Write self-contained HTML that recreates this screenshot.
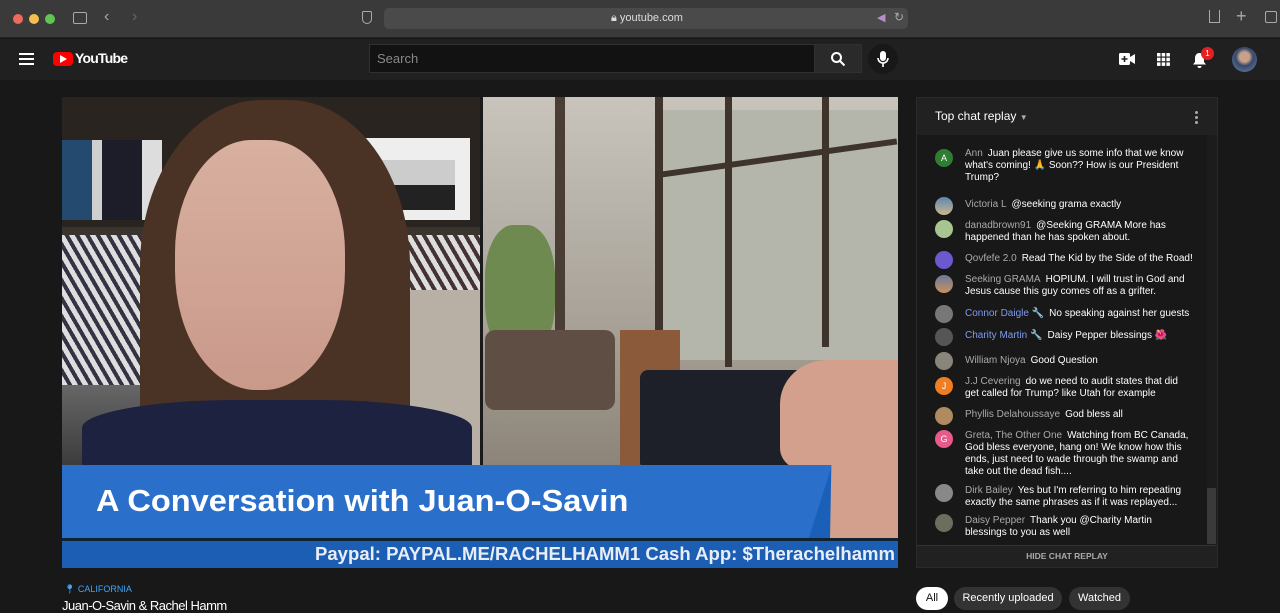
<!DOCTYPE html>
<html><head><meta charset="utf-8"><style>
*{margin:0;padding:0;box-sizing:border-box}
body{width:1280px;height:612px;overflow:hidden;background:#181818;font-family:"Liberation Sans",sans-serif;color:#fff;position:relative}
.abs{position:absolute}
.chat .row{position:absolute;left:965px;width:228px;font-size:10px;line-height:12px;color:#fff}
.chat .n{color:#aaa;margin-right:5px}
.chat .mod{color:#7e9cf0}
.av{position:absolute;left:935px;width:18px;height:18px;border-radius:50%;font-size:9px;text-align:center;line-height:18px;color:#fff}
</style></head><body>
<!-- browser bar -->
<div class="abs" style="left:0;top:0;width:1280px;height:38px;background:#3a3a3a;border-bottom:1px solid #222"></div>
<div class="abs" style="left:13px;top:14px;width:10px;height:10px;border-radius:50%;background:#ec6a5e"></div>
<div class="abs" style="left:29px;top:14px;width:10px;height:10px;border-radius:50%;background:#f4bf4f"></div>
<div class="abs" style="left:45px;top:14px;width:10px;height:10px;border-radius:50%;background:#61c554"></div>
<div class="abs" style="left:73px;top:12px;width:14px;height:12px;border:1.5px solid #aaa;border-radius:2px"></div>
<div class="abs" style="left:104px;top:8px;font-size:16px;color:#aaa">‹</div>
<div class="abs" style="left:132px;top:8px;font-size:16px;color:#666">›</div>
<div class="abs" style="left:362px;top:11px;width:10px;height:13px;border:1.5px solid #aaa;border-radius:2px 2px 6px 6px"></div>
<div class="abs" style="left:384px;top:8px;width:524px;height:21px;background:#4a4a4a;border-radius:5px"></div>
<div class="abs" style="left:611px;top:12px;font-size:11px;color:#ddd">🔒︎ youtube.com</div>
<div class="abs" style="left:877px;top:11px;font-size:11px;color:#b98cc7">◀</div>
<div class="abs" style="left:894px;top:10px;font-size:12px;color:#aaa">↻</div>
<div class="abs" style="left:1209px;top:10px;width:11px;height:13px;border:1.5px solid #aaa;border-top:none"></div>
<div class="abs" style="left:1236px;top:6px;font-size:18px;color:#aaa">+</div>
<div class="abs" style="left:1265px;top:11px;width:12px;height:12px;border:1.5px solid #aaa;border-radius:2px"></div>
<!-- yt header -->
<div class="abs" style="left:0;top:39px;width:1280px;height:41px;background:#202020"></div>
<div class="abs" style="left:19px;top:53px;width:15px;height:2px;background:#fff;box-shadow:0 5px #fff,0 10px #fff"></div>
<div class="abs" style="left:53px;top:52px;width:20px;height:14px;background:#f00;border-radius:4px"></div>
<div class="abs" style="left:60px;top:55px;width:0;height:0;border-left:7px solid #fff;border-top:4px solid transparent;border-bottom:4px solid transparent"></div>
<div class="abs" style="left:75px;top:50px;font-size:14px;font-weight:bold;letter-spacing:-0.8px">YouTube</div>
<div class="abs" style="left:369px;top:44px;width:446px;height:29px;background:#121212;border:1px solid #303030"></div>
<div class="abs" style="left:377px;top:51px;font-size:13px;color:#888">Search</div>
<div class="abs" style="left:814px;top:44px;width:48px;height:29px;background:#2a2a2a;border:1px solid #303030"></div>
<svg class="abs" style="left:830px;top:51px" width="16" height="16" viewBox="0 0 16 16"><circle cx="6.5" cy="6.5" r="4.5" fill="none" stroke="#fff" stroke-width="2"/><path d="M10 10l4.5 4.5" stroke="#fff" stroke-width="2"/></svg>
<div class="abs" style="left:868px;top:44px;width:30px;height:30px;border-radius:50%;background:#181818"></div>
<svg class="abs" style="left:877px;top:51px" width="12" height="16" viewBox="0 0 12 16"><rect x="3" y="0" width="6" height="10" rx="3" fill="#fff"/><path d="M1 7a5 5 0 0010 0M6 12v4" stroke="#fff" stroke-width="1.6" fill="none"/></svg>
<svg class="abs" style="left:1119px;top:53px" width="16" height="12"><rect x="0" y="0" width="11" height="12" rx="1.5" fill="#fff"/><path d="M11 4l5-3v10l-5-3z" fill="#fff"/><path d="M5.5 3v6M2.5 6h6" stroke="#202020" stroke-width="1.6"/></svg>
<svg class="abs" style="left:1157px;top:53px" width="13" height="13"><g fill="#fff"><rect x="0" y="0" width="3.5" height="3.5"/><rect x="4.7" y="0" width="3.5" height="3.5"/><rect x="9.4" y="0" width="3.5" height="3.5"/><rect x="0" y="4.7" width="3.5" height="3.5"/><rect x="4.7" y="4.7" width="3.5" height="3.5"/><rect x="9.4" y="4.7" width="3.5" height="3.5"/><rect x="0" y="9.4" width="3.5" height="3.5"/><rect x="4.7" y="9.4" width="3.5" height="3.5"/><rect x="9.4" y="9.4" width="3.5" height="3.5"/></g></svg>
<svg class="abs" style="left:1192px;top:52px" width="15" height="16"><path d="M7.5 1c-3 0-4.5 2.5-4.5 5v4L1 12.5h13L12 10V6c0-2.5-1.5-5-4.5-5zM5.5 14a2 2 0 004 0z" fill="#fff"/></svg>
<div class="abs" style="left:1201px;top:47px;width:13px;height:13px;border-radius:50%;background:#e52020;font-size:8px;text-align:center;line-height:13px">1</div>
<div class="abs" style="left:1232px;top:47px;width:25px;height:25px;border-radius:50%;background:radial-gradient(circle at 50% 40%,#c9a08a 0 25%,#36486a 45%,#6c86a8 100%)"></div>
<!-- video -->
<div class="abs" style="left:62px;top:97px;width:418px;height:371px;background:linear-gradient(180deg,#2c2622 0%,#3b3530 40%,#8a8a8a 60%,#3a3a3a 100%)"></div>
<div class="abs" style="left:62px;top:97px;width:418px;height:130px;background:#2a2420"></div>
<div class="abs" style="left:62px;top:140px;width:100px;height:80px;background:linear-gradient(90deg,#254a70 0 30%,#cfcfcf 30% 40%,#1d1d2a 40% 80%,#ddd 80%)"></div>
<div class="abs" style="left:62px;top:235px;width:90px;height:150px;background:repeating-linear-gradient(60deg,#ddd 0 5px,#334 5px 9px)"></div>
<div class="abs" style="left:388px;top:235px;width:92px;height:60px;background:repeating-linear-gradient(60deg,#ddd 0 5px,#433 5px 9px)"></div>
<div class="abs" style="left:360px;top:138px;width:110px;height:82px;background:#eee"></div>
<div class="abs" style="left:375px;top:160px;width:80px;height:50px;background:linear-gradient(180deg,#ccc 0 50%,#222 50%)"></div>
<div class="abs" style="left:410px;top:290px;width:70px;height:180px;background:#b8b0a4"></div>
<div class="abs" style="left:140px;top:100px;width:270px;height:370px;border-radius:45% 45% 10% 10%;background:#4a3224"></div>
<div class="abs" style="left:175px;top:140px;width:170px;height:250px;border-radius:45% 45% 48% 48%;background:linear-gradient(180deg,#d8b0a0,#c9998a)"></div>
<div class="abs" style="left:82px;top:400px;width:390px;height:70px;border-radius:40% 40% 0 0;background:#1d2240"></div>
<div class="abs" style="left:480px;top:97px;width:3px;height:371px;background:#1a1a1a"></div>
<div class="abs" style="left:483px;top:97px;width:415px;height:371px;background:linear-gradient(180deg,#c8c4bc,#a8a298 60%,#8c8478)"></div>
<div class="abs" style="left:660px;top:110px;width:238px;height:250px;background:#b4b6ac"></div>
<div class="abs" style="left:555px;top:97px;width:10px;height:280px;background:#4a3e34"></div>
<div class="abs" style="left:655px;top:97px;width:8px;height:300px;background:#3e342c"></div>
<div class="abs" style="left:725px;top:97px;width:7px;height:270px;background:#3e342c"></div>
<div class="abs" style="left:822px;top:97px;width:7px;height:250px;background:#3e342c"></div>
<div class="abs" style="left:660px;top:155px;width:238px;height:6px;background:#3e342c;transform:rotate(-8deg)"></div>
<div class="abs" style="left:485px;top:225px;width:70px;height:130px;border-radius:40%;background:#6e8a50"></div>
<div class="abs" style="left:485px;top:330px;width:130px;height:80px;background:#5e4e44;border-radius:10px"></div>
<div class="abs" style="left:620px;top:330px;width:60px;height:140px;background:#8a5a3a"></div>
<div class="abs" style="left:640px;top:370px;width:170px;height:100px;background:#1d2028;border-radius:8px"></div>
<div class="abs" style="left:780px;top:360px;width:118px;height:110px;background:#d2a08c;border-radius:40% 0 0 20%"></div>
<!-- banner -->
<div class="abs" style="left:62px;top:465px;width:836px;height:103px;background:#1a5fb8"></div>
<div class="abs" style="left:62px;top:465px;width:770px;height:73px;background:#2a6fca;clip-path:polygon(0 0,100% 0,97% 100%,0 100%)"></div>
<div class="abs" style="left:830px;top:465px;width:68px;height:75px;background:#d2a08c;clip-path:polygon(2% 0,100% 0,100% 100%,0 100%)"></div>
<div class="abs" style="left:62px;top:538px;width:836px;height:3px;background:#123"></div>
<div class="abs" style="left:96px;top:483px;font-size:31px;font-weight:bold;color:#fff;white-space:nowrap;transform:scaleX(1.05);transform-origin:left top">A Conversation with Juan-O-Savin</div>
<div class="abs" style="left:62px;top:541px;width:836px;height:27px;background:#1b5eb4"></div>
<div class="abs" style="left:315px;top:544px;font-size:18px;font-weight:bold;color:#e8eef8;white-space:nowrap;transform:scaleX(1.03);transform-origin:left top">Paypal: PAYPAL.ME/RACHELHAMM1 Cash App: $Therachelhamm</div>
<div class="abs" style="left:64px;top:584px;font-size:9px;color:#3ea6ff">📍︎ CALIFORNIA</div>
<div class="abs" style="left:62px;top:598px;font-size:13px;color:#fff;letter-spacing:-0.5px">Juan-O-Savin &amp; Rachel Hamm</div>
<!-- chat -->
<div class="abs" style="left:916px;top:97px;width:302px;height:471px;background:#181818;border:1px solid #2a2a2a"></div>
<div class="abs" style="left:917px;top:98px;width:300px;height:37px;background:#212121"></div>
<div class="abs" style="left:935px;top:109px;font-size:12px">Top chat replay <span style="font-size:8px;color:#aaa">▼</span></div>
<div class="abs" style="left:1195px;top:111px;width:3px;height:3px;background:#aaa;box-shadow:0 5px #aaa,0 10px #aaa;border-radius:50%"></div>
<div class="abs" style="left:1207px;top:135px;width:10px;height:410px;background:#1c1c1c"></div>
<div class="abs" style="left:1207px;top:488px;width:9px;height:56px;background:#3a3a3a"></div>
<div class="chat">
<div class="av" style="top:149px;background:#2e7d32">A</div>
<div class="row" style="top:148px"><span class="n">Ann</span>Juan please give us some info that we know what's coming! 🙏 Soon?? How is our President Trump?</div>
<div class="av" style="top:197px;background:linear-gradient(#5a86b4,#cdb88a)"></div>
<div class="row" style="top:199px"><span class="n">Victoria L</span>@seeking grama exactly</div>
<div class="av" style="top:220px;background:#a8c490"></div>
<div class="row" style="top:220px"><span class="n">danadbrown91</span>@Seeking GRAMA More has happened than he has spoken about.</div>
<div class="av" style="top:251px;background:#6a5acd"></div>
<div class="row" style="top:253px"><span class="n">Qovfefe 2.0</span>Read The Kid by the Side of the Road!</div>
<div class="av" style="top:275px;background:linear-gradient(#6a7a9a,#c89060)"></div>
<div class="row" style="top:274px"><span class="n">Seeking GRAMA</span>HOPIUM. I will trust in God and Jesus cause this guy comes off as a grifter.</div>
<div class="av" style="top:305px;background:#777"></div>
<div class="row" style="top:308px"><span class="n mod">Connor Daigle 🔧</span>No speaking against her guests</div>
<div class="av" style="top:328px;background:#555"></div>
<div class="row" style="top:330px"><span class="n mod">Charity Martin 🔧</span>Daisy Pepper blessings 🌺</div>
<div class="av" style="top:352px;background:#8a857a"></div>
<div class="row" style="top:355px"><span class="n">William Njoya</span>Good Question</div>
<div class="av" style="top:377px;background:#ef7d22">J</div>
<div class="row" style="top:376px"><span class="n">J.J Cevering</span>do we need to audit states that did get called for Trump? like Utah for example</div>
<div class="av" style="top:407px;background:#b08a60"></div>
<div class="row" style="top:409px"><span class="n">Phyllis Delahoussaye</span>God bless all</div>
<div class="av" style="top:430px;background:#e85a8a">G</div>
<div class="row" style="top:430px"><span class="n">Greta, The Other One</span>Watching from BC Canada, God bless everyone, hang on! We know how this ends, just need to wade through the swamp and take out the dead fish....</div>
<div class="av" style="top:484px;background:#888"></div>
<div class="row" style="top:485px"><span class="n">Dirk Bailey</span>Yes but I'm referring to him repeating exactly the same phrases as if it was replayed...</div>
<div class="av" style="top:514px;background:#6a6e5e"></div>
<div class="row" style="top:515px;width:200px"><span class="n">Daisy Pepper</span>Thank you @Charity Martin blessings to you as well</div>
</div>
<div class="abs" style="left:917px;top:545px;width:300px;height:22px;background:#212121;border-top:1px solid #333"></div>
<div class="abs" style="left:917px;top:551px;width:300px;text-align:center;font-size:8.5px;color:#aaa;font-weight:bold">HIDE CHAT REPLAY</div>
<div class="abs" style="left:916px;top:587px;width:32px;height:23px;border-radius:12px;background:#fff;color:#0f0f0f;font-size:11px;text-align:center;line-height:23px">All</div>
<div class="abs" style="left:954px;top:587px;width:108px;height:23px;border-radius:12px;background:#333;font-size:11px;text-align:center;line-height:23px">Recently uploaded</div>
<div class="abs" style="left:1069px;top:587px;width:61px;height:23px;border-radius:12px;background:#333;font-size:11px;text-align:center;line-height:23px">Watched</div>
</body></html>
